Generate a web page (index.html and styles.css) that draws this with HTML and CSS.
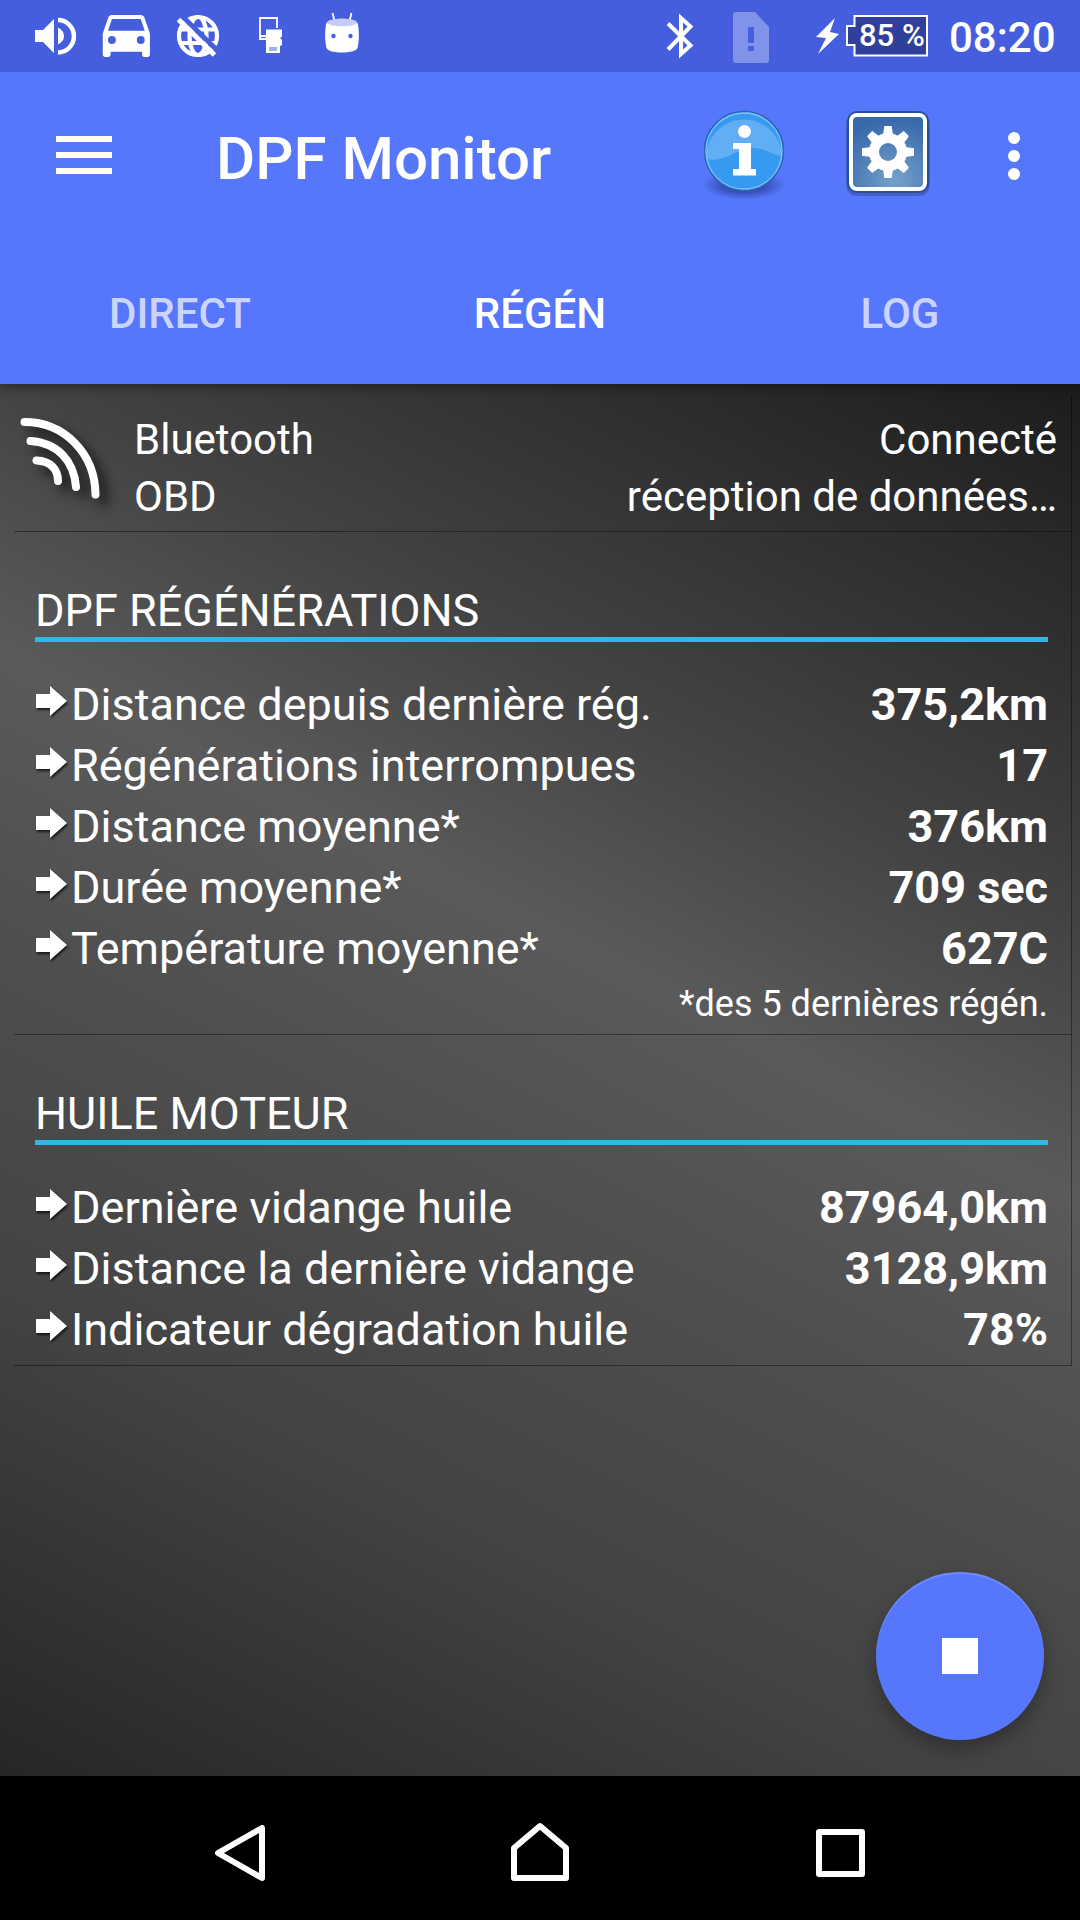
FILE: index.html
```html
<!DOCTYPE html>
<html lang="fr">
<head>
    <meta charset="UTF-8">
    <title>DPF Monitor</title>
    <link rel="stylesheet" href="styles.css">
</head>
<body>
    <div class="statusbar">
        <svg class="slot" viewBox="0 0 72 72"><path fill="#fff" d="M17 30h8l11-11v34l-11-11h-8zM40 27.500q6 3 6 8.500t-6 8.500z"/><path fill="none" stroke="#fff" stroke-width="4.500" d="M40 20a15.700 16 0 0 1 0 32.500"/></svg>
        <svg class="slot" viewBox="0 0 72 72"><path fill="#fff" transform="translate(4.900 2) scale(2.620)" d="M18.920 6.010C18.720 5.420 18.160 5 17.500 5h-11c-.66 0-1.210.42-1.420 1.010L3 12v8c0 .55.45 1 1 1h1c.55 0 1-.45 1-1v-1h12v1c0 .55.45 1 1 1h1c.55 0 1-.45 1-1v-8zM6.500 16a1.500 1.500 0 1 1 0-3 1.500 1.500 0 0 1 0 3zm11 0a1.500 1.500 0 1 1 0-3 1.500 1.500 0 0 1 0 3zM5 11l1.500-4.500h11L19 11z"/></svg>
        <svg class="slot" viewBox="0 0 72 72">
            <g fill="none" stroke="#fff" stroke-width="4.200"><circle cx="36" cy="36" r="19"/><ellipse cx="36" cy="36" rx="8.500" ry="19"/><path d="M18 29.500h36M18 43h36"/></g>
            <path stroke="#455ede" stroke-width="5" d="M18 14l40 39"/><path stroke="#fff" stroke-width="5" d="M16.500 19.500L52.500 55"/>
        </svg>
        <svg class="slot" viewBox="0 0 72 72">
            <path fill="none" stroke="#fff" stroke-width="1.800" d="M43 28V18H26v21h6M26 36h6"/>
            <path fill="#fff" d="M32 29.500h16v7l-2 1.500 2 2v5l-2 1v7H32z"/><path stroke="#455ede" stroke-width="1" d="M36 47v4M38 47v4M40 47v4M42 47v4"/>
        </svg>
        <svg class="slot" viewBox="0 0 72 72">
            <path stroke="#fff" stroke-width="1.800" d="M26.500 13l2 8M45.500 13l-2 8"/>
            <path fill="#fff" d="M20 24c4-7 28-7 32 0q2 14-.5 24c-2 6-29 6-31 0q-2.500-10-.5-24z"/>
            <ellipse cx="36" cy="22.500" rx="15" ry="3.800" fill="#c5cdf6"/><circle cx="27.500" cy="36" r="2.200" fill="#455ede"/><circle cx="44.500" cy="36" r="2.200" fill="#455ede"/>
        </svg>
        <svg class="slot right" viewBox="0 0 72 72"><path fill="none" stroke="#fff" stroke-width="4" d="M24 23.500L46.500 45.500 37 54V18l9.500 8.500L24 49.500"/></svg>
        <svg class="slot" viewBox="0 0 72 72"><path fill="#8192ea" d="M20 12h19l14 15v33q0 3-3 3H20q-3 0-3-3V15q0-3 3-3z"/><path fill="#455ede" d="M32 27h6v16h-6zM32 46h6v5h-6z"/></svg>
        <svg class="bolt" viewBox="0 0 24 72"><path fill="#fff" d="M19 18L0 37l10 1-8 16 21-20-9-2z"/></svg>
        <div class="battery">
            <svg viewBox="0 0 84 44"><path fill="#303f9b" stroke="#fff" stroke-width="2" d="M9.500 2H82v39.500H9.500V31H2V12h7.500z"/></svg>
            <span>85 %</span>
        </div>
        <div class="clock">08:20</div>
    </div>

    <div class="appbar">
        <div class="toolbar">
            <div class="burger"><i></i><i></i><i></i></div>
            <h1>DPF Monitor</h1>
            <svg class="info" viewBox="0 0 96 96">
                <defs>
                    <radialGradient id="shade"><stop offset="0.500" stop-color="#2b3f9d" stop-opacity=".7"/><stop offset="1" stop-color="#2b3f9d" stop-opacity="0"/></radialGradient>
                </defs>
                <ellipse cx="48" cy="80" rx="42" ry="15" fill="url(#shade)"/>
                <circle cx="48" cy="46" r="39.500" fill="#359af0" stroke="#2a63b8" stroke-width="1.500"/>
                <path fill="#61aef4" d="M10 54C32 58 40 42 58 43c14 1 19 8 28 8A38 38 0 1 0 10 54z"/>
                <circle cx="48" cy="46" r="38" fill="none" stroke="#7fbdf8" stroke-width="1.300"/>
                <circle cx="48.500" cy="26.500" r="6.500" fill="#fff"/>
                <path fill="#fff" d="M37 38h18v26h5v6.500H37V64h6V44h-6z"/>
            </svg>
            <svg class="gear" viewBox="0 0 96 96">
                <defs>
                    <radialGradient id="tile" cx=".6" cy=".9" r=".9"><stop offset="0" stop-color="#76a1cb"/><stop offset="1" stop-color="#3668aa"/></radialGradient>
                </defs>
                <rect x="6" y="8" width="84" height="83" rx="11" fill="#36509d" opacity=".55"/>
                <rect x="7" y="6" width="82" height="82" rx="10" fill="#28509a"/>
                <rect x="9" y="8" width="78" height="78" rx="8" fill="#fff"/>
                <rect x="13" y="12" width="70" height="70" rx="4" fill="url(#tile)"/>
                <g fill="#fff" transform="translate(48 47)">
                    <g id="teeth"><path d="M-3.700-26h7.400l1.300 9H-5zM-3.700 26h7.400l1.300-9H-5z"/><path transform="rotate(90)" d="M-3.700-26h7.400l1.300 9H-5zM-3.700 26h7.400l1.300-9H-5z"/></g>
                    <use href="#teeth" transform="rotate(45)"/>
                </g>
                <circle cx="48" cy="47" r="14" fill="none" stroke="#fff" stroke-width="10"/>
            </svg>
            <div class="dots"><i></i><i></i><i></i></div>
        </div>
        <div class="tabs">
            <div class="tab">DIRECT</div>
            <div class="tab active">RÉGÉN</div>
            <div class="tab">LOG</div>
        </div>
    </div>

    <div class="content">
        <div class="panel connection">
            <svg class="signal" viewBox="0 0 100 100"><g fill="none" stroke="#fff" stroke-width="8" stroke-linecap="round"><path d="M12.500 13C52 13 83 44 83.500 85.500"/><path d="M18.500 32C46 34 62 52 64 78"/><path d="M24.500 51.500C38 52 46 60 46 72"/></g></svg>
            <div class="names">Bluetooth<br>OBD</div>
            <div class="state">Connecté<br>réception de données…</div>
        </div>

        <div class="panel">
            <h2>DPF RÉGÉNÉRATIONS</h2>
            <ul>
                <li><svg class="arrow" viewBox="0 0 36 40"><path d="M1 13h14V5l17 15-17 15v-8H1z"/></svg>Distance depuis dernière rég.<b>375,2km</b></li>
                <li><svg class="arrow" viewBox="0 0 36 40"><path d="M1 13h14V5l17 15-17 15v-8H1z"/></svg>Régénérations interrompues<b>17</b></li>
                <li><svg class="arrow" viewBox="0 0 36 40"><path d="M1 13h14V5l17 15-17 15v-8H1z"/></svg>Distance moyenne*<b>376km</b></li>
                <li><svg class="arrow" viewBox="0 0 36 40"><path d="M1 13h14V5l17 15-17 15v-8H1z"/></svg>Durée moyenne*<b>709 sec</b></li>
                <li><svg class="arrow" viewBox="0 0 36 40"><path d="M1 13h14V5l17 15-17 15v-8H1z"/></svg>Température moyenne*<b>627C</b></li>
            </ul>
            <p class="note">*des 5 dernières régén.</p>
        </div>

        <div class="panel">
            <h2>HUILE MOTEUR</h2>
            <ul>
                <li><svg class="arrow" viewBox="0 0 36 40"><path d="M1 13h14V5l17 15-17 15v-8H1z"/></svg>Dernière vidange huile<b>87964,0km</b></li>
                <li><svg class="arrow" viewBox="0 0 36 40"><path d="M1 13h14V5l17 15-17 15v-8H1z"/></svg>Distance la dernière vidange<b>3128,9km</b></li>
                <li><svg class="arrow" viewBox="0 0 36 40"><path d="M1 13h14V5l17 15-17 15v-8H1z"/></svg>Indicateur dégradation huile<b>78%</b></li>
            </ul>
        </div>

        <!-- stop -->
        <div class="fab"><i></i></div>
    </div>

    <div class="navbar">
        <svg viewBox="0 0 72 72"><path d="M14 36L58 11v50z"/></svg>
        <svg viewBox="0 0 72 72"><path d="M10 31L36 9l26 22v30H10z"/></svg>
        <svg viewBox="0 0 72 72"><path d="M15 15h43v42H15z"/></svg>
    </div>
</body>
</html>
```

FILE: styles.css
```css
body,h1,h2,ul,p {margin:0;padding:0;}
ul {list-style-type:none;}
svg {display:block;flex:none;}
body {width:1080px;height:1920px;display:flex;flex-direction:column;font-family:Roboto,"Liberation Sans",sans-serif;color:#fff;background:#000;overflow:hidden;}

/* status bar */
.statusbar {position:relative;z-index:2;display:flex;height:72px;padding-left:18px;background:#455ede;}
.slot {width:72px;height:72px;}
.slot.right {margin-left:266px;}
.bolt {width:24px;height:72px;margin-left:28px;}
.battery {position:relative;width:84px;height:44px;margin:14px 0 0 5px;}
.battery span {position:absolute;left:14px;top:5px;font-size:31px;line-height:34px;font-weight:500;white-space:nowrap;}
.clock {margin-left:20px;font-size:42px;line-height:75px;font-weight:500;}

/* app bar */
.appbar {position:relative;z-index:1;height:312px;background:#5677fc;box-shadow:0 3px 10px rgba(0,0,0,.4);}
.toolbar {display:flex;height:168px;}
.burger {width:56px;margin:64px 0 0 56px;}
.burger i {display:block;height:6px;margin-bottom:10px;background:#fff;}
.toolbar h1 {width:480px;margin-left:104px;font-size:60px;line-height:173px;font-weight:500;white-space:nowrap;}
.info {width:96px;height:96px;margin-top:33px;}
.gear {width:96px;height:96px;margin:33px 0 0 48px;}
.dots {margin:60px 0 0 72px;}
.dots i {display:block;width:12px;height:12px;margin-bottom:6px;border-radius:6px;background:#fff;}
.tabs {display:flex;height:144px;}
.tab {flex:1;text-align:center;font-size:42px;line-height:147px;font-weight:500;color:rgba(255,255,255,.7);}
.tab.active {color:#fff;}

/* content */
.content {position:relative;height:1381px;padding:11px 8px 0 14px;background:linear-gradient(207deg,#1c1c1c 0%,#434343 28%,#5a5a5a 42%,#4f4f4f 56%,#434343 75%,#262626 100%);}
.panel {padding:52px 23px 5px 21px;border-right:1px solid rgba(0,0,0,.4);border-bottom:1px solid rgba(0,0,0,.4);}
.connection {display:flex;height:120px;padding:16px 14px 0 0;font-size:42px;line-height:57px;}
.signal {width:100px;height:100px;margin:-2px 0 0 -2px;filter:drop-shadow(8px 8px 6px rgba(0,0,0,.7));}
.names {margin-left:22px;}
.state {flex:1;text-align:right;}
.panel h2 {height:53px;font-size:45px;line-height:53px;font-weight:400;border-bottom:5px solid #33b5e5;margin-bottom:32px;}
.panel li {display:flex;font-size:45px;line-height:61px;}
.panel li b {margin-left:auto;}
.arrow {width:36px;height:40px;margin-top:7px;fill:#fff;filter:drop-shadow(1px 2px 1px rgba(0,0,0,.7));}
.note {padding:4px 0;font-size:36px;line-height:42px;text-align:right;}

.fab {position:absolute;left:876px;top:1188px;width:168px;height:168px;display:flex;align-items:center;justify-content:center;border-radius:50%;background:#5677fc;box-shadow:0 9px 20px rgba(0,0,0,.3),inset 0 2px 1px rgba(255,255,255,.15);}
.fab i {width:36px;height:36px;background:#fff;}

/* navigation keys */
.navbar {display:flex;justify-content:space-between;height:144px;padding:41px 204px 0;box-sizing:border-box;background:#000;}
.navbar svg {width:72px;height:72px;fill:none;stroke:#fff;stroke-width:6;stroke-linejoin:round;}
```
